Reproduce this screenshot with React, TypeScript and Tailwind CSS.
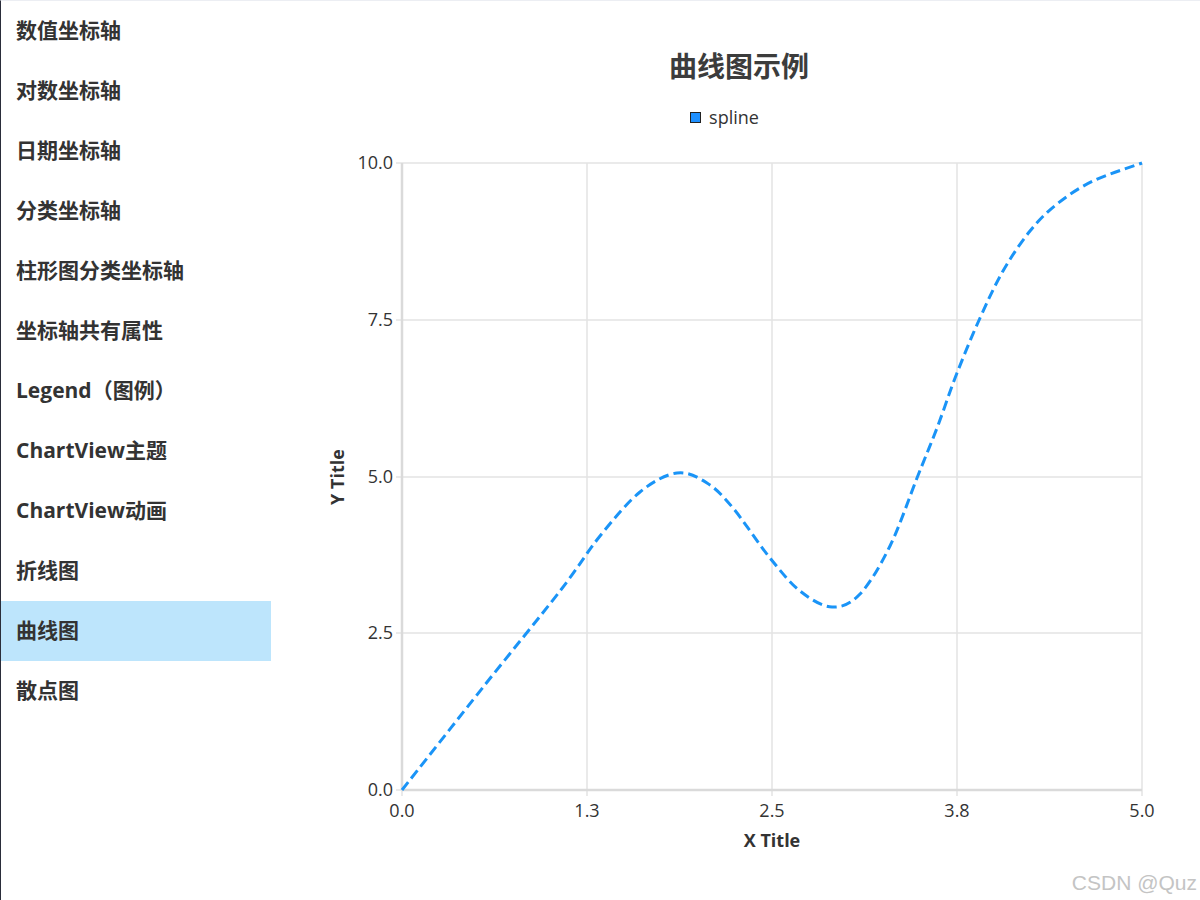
import React from "react";

const items = [
  "数值坐标轴",
  "对数坐标轴",
  "日期坐标轴",
  "分类坐标轴",
  "柱形图分类坐标轴",
  "坐标轴共有属性",
  "Legend（图例）",
  "ChartView主题",
  "ChartView动画",
  "折线图",
  "曲线图",
  "散点图",
];

const raw: [number, number][] = [
  [402, 789], [484, 685], [560, 590], [600, 535], [640, 491], [677, 472],
  [707, 482], [733, 507], [770, 557], [800, 590], [832, 606], [860, 593],
  [890, 545], [917, 477], [937, 427], [957, 372], [980, 317], [1003, 270],
  [1030, 230], [1057, 203], [1093, 180], [1142, 162],
];

function catmull(pts: [number, number][]) {
  const p = pts.map(([x, y]) => [x - 271, y - 140] as [number, number]);
  let d = `M${p[0][0]},${p[0][1]}`;
  for (let i = 0; i < p.length - 1; i++) {
    const p0 = p[i - 1] || p[i];
    const p1 = p[i];
    const p2 = p[i + 1];
    const p3 = p[i + 2] || p2;
    const c1x = p1[0] + (p2[0] - p0[0]) / 6;
    const c1y = p1[1] + (p2[1] - p0[1]) / 6;
    const c2x = p2[0] - (p3[0] - p1[0]) / 6;
    const c2y = p2[1] - (p3[1] - p1[1]) / 6;
    d += ` C${c1x.toFixed(1)},${c1y.toFixed(1)} ${c2x.toFixed(1)},${c2y.toFixed(1)} ${p2[0]},${p2[1]}`;
  }
  return d;
}

const xs = [131, 316, 501, 686, 871];
const xl = ["0.0", "1.3", "2.5", "3.8", "5.0"];
const ys = [22, 179, 336, 492, 649];
const yl = ["10.0", "7.5", "5.0", "2.5", "0.0"];

export default function App() {
  const font = '"Open Sans", "Noto Sans CJK SC", sans-serif';
  return (
    <div
      className="relative flex w-[1200px] h-[900px] overflow-hidden bg-white border-t border-t-[#eceef3] border-l border-l-[#2a2d3a] text-[#333333]"
      style={{ fontFamily: font }}
    >
      <div className="w-[270px] flex flex-col shrink-0">
        {items.map((t) => (
          <div
            key={t}
            className={`h-[60px] flex items-center pl-[15px] text-[21px] font-bold ${
              t === "曲线图" ? "bg-[#bde5fc]" : ""
            }`}
          >
            {t}
          </div>
        ))}
      </div>
      <div className="flex-1 flex flex-col">
        <div className="pt-[47px] h-[83px] leading-[36px] text-[28px] font-bold text-[#3c3c3c] text-center pl-[7px]">
          曲线图示例
        </div>
        <div className="mt-[22px] h-[24px] flex items-center justify-center gap-[8px] pr-[22px] text-[18px] leading-[24px] text-[#333]">
          <span className="w-[11px] h-[11px] bg-[#1e90ff] border-[1.5px] border-[#222]" />
          <span className="-mt-[2px]">spline</span>
        </div>
        <svg width="929" height="760" className="mt-[11px] block" style={{ fontFamily: font }}>
          {ys.map((y) => (
            <line key={"h" + y} x1={125} x2={871} y1={y} y2={y} stroke="#e3e3e3" strokeWidth={1.5} />
          ))}
          {xs.map((x) => (
            <line key={"v" + x} x1={x} x2={x} y1={22} y2={655} stroke="#e3e3e3" strokeWidth={1.5} />
          ))}
          <line x1={131} x2={131} y1={22} y2={649} stroke="#dadada" strokeWidth={2.5} />
          <line x1={131} x2={871} y1={649} y2={649} stroke="#dadada" strokeWidth={2.5} />
          {ys.map((y, i) => (
            <text key={"yl" + y} x={122} y={y + 6} textAnchor="end" fontSize={18} fill="#333">
              {yl[i]}
            </text>
          ))}
          {xs.map((x, i) => (
            <text key={"xl" + x} x={x} y={676} textAnchor="middle" fontSize={18} fill="#333">
              {xl[i]}
            </text>
          ))}
          <text x={501} y={706} textAnchor="middle" fontSize={18} fontWeight={700} fill="#333">
            X Title
          </text>
          <text
            x={0}
            y={0}
            transform="translate(73,336) rotate(-90)"
            textAnchor="middle"
            fontSize={18}
            fontWeight={700}
            fill="#333"
          >
            Y Title
          </text>
          <path
            d={catmull(raw)}
            fill="none"
            stroke="#1a94f7"
            strokeWidth={3}
            strokeDasharray="10 5"
          />
        </svg>
      </div>
      <div className="absolute right-[3px] bottom-[7px] text-[21px] text-[#c4c4c4] leading-none" style={{ fontFamily: '"Liberation Sans", sans-serif' }}>
        CSDN @Quz
      </div>
    </div>
  );
}
